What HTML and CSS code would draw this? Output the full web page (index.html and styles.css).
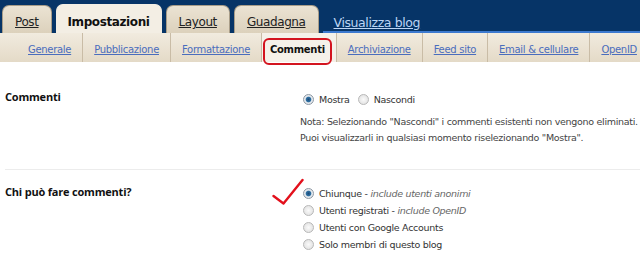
FILE: index.html
```html
<!DOCTYPE html>
<html lang="it">
<head>
    <meta charset="UTF-8">
    <meta name="viewport" content="width=device-width, initial-scale=1.0">
    <title>Impostazioni - Commenti</title>
    <link rel="stylesheet" href="styles.css">
</head>
<body>
    <div class="header">
        <ul class="tabs">
            <li class="tab"><a href="#">Post</a></li>
            <li class="tab active"><a href="#">Impostazioni</a></li>
            <li class="tab"><a href="#">Layout</a></li>
            <li class="tab"><a href="#">Guadagna</a></li>
        </ul>
        <div class="header-rest">
            <a class="view-blog" href="#">Visualizza blog</a>
        </div>
    </div>
    <nav class="subnav">
        <ul>
            <li><a href="#">Generale</a></li>
            <li><a href="#">Pubblicazione</a></li>
            <li><a href="#">Formattazione</a></li>
            <li class="current"><span>Commenti</span></li>
            <li><a href="#">Archiviazione</a></li>
            <li><a href="#">Feed sito</a></li>
            <li><a href="#">Email &amp; cellulare</a></li>
            <li><a href="#">OpenID</a></li>
        </ul>
    </nav>

    <div class="settings">
        <div class="setting-row">
            <div class="setting-label">Commenti</div>
            <div class="setting-options">
                <div class="inline-options">
                    <label><input type="radio" name="show" checked> <span>Mostra</span></label>
                    <label><input type="radio" name="show"> <span>Nascondi</span></label>
                </div>
                <p class="note">Nota: Selezionando "Nascondi" i commenti esistenti non vengono eliminati.<br>Puoi visualizzarli in qualsiasi momento riselezionando "Mostra".</p>
            </div>
        </div>
        <div class="setting-row">
            <div class="setting-label">Chi può fare commenti?</div>
            <div class="setting-options">
                <svg class="check" width="32" height="28" viewBox="0 0 32 28">
                    <path d="M1.5 18 L11.5 25.5 L30.5 2" fill="none" stroke="#e3101c" stroke-width="2.4" stroke-linejoin="round" stroke-linecap="round"/>
                </svg>
                <ul class="option-list">
                    <li><label><input type="radio" name="who" checked> <span>Chiunque - <em>include utenti anonimi</em></span></label></li>
                    <li><label><input type="radio" name="who"> <span>Utenti registrati - <em>include OpenID</em></span></label></li>
                    <li><label><input type="radio" name="who"> <span>Utenti con Google Accounts</span></label></li>
                    <li><label><input type="radio" name="who"> <span>Solo membri di questo blog</span></label></li>
                </ul>
            </div>
        </div>
    </div>
</body>
</html>
```

FILE: styles.css
```css
body {
    margin: 0;
    padding: 0;
    background-color: #fff;
    color: #333;
    font-family: 'DejaVu Sans', Verdana, sans-serif;
}

ul {
    list-style: none;
    margin: 0;
    padding: 0;
}

.header {
    display: flex;
    align-items: flex-end;
    height: 33px;
    background-color: #063467;
    padding-left: 2px;
}

.tabs {
    display: flex;
    align-items: flex-end;
}

.tab {
    margin-right: 4px;
    height: 28px;
    background: linear-gradient(#ebe3d3, #dcd1bc);
    border: 1px solid #a99d88;
    border-bottom: none;
    border-radius: 7px 7px 0 0;
    box-sizing: border-box;
}

.tab a {
    display: block;
    padding: 9px 12px 0;
    color: #222;
    font-size: 12px;
    letter-spacing: -0.4px;
}

.tab.active {
    height: 29px;
    background: #f3eee4;
    border-color: #f3eee4;
}

.tab.active a {
    padding: 10px 11px 0;
    text-decoration: none;
    font-weight: bold;
    color: #111;
}

.header-rest {
    flex: 1;
    align-self: stretch;
    display: flex;
    align-items: flex-end;
    border-bottom: 2px solid #3c79cf;
    padding-left: 11px;
}

.view-blog {
    color: #bcd5f5;
    font-size: 12.5px;
    letter-spacing: -0.4px;
    margin-bottom: 1px;
}

.subnav {
    background: linear-gradient(#f1ebdf, #e4dac7);
    height: 29px;
}

.subnav ul {
    display: flex;
    padding-left: 17px;
    height: 100%;
}

.subnav li {
    display: flex;
    align-items: center;
    padding: 4px 11px 0;
    border-left: 1px solid #c9bca6;
    font-size: 10px;
    letter-spacing: -0.3px;
    white-space: nowrap;
}

.subnav li:first-child {
    border-left: none;
}

.subnav a {
    color: #4a6dbd;
}

.subnav li.current {
    position: relative;
    background-color: #f5f1e9;
    padding: 4px 11px 0 8px;
}

.subnav li.current span {
    color: #111;
    font-weight: bold;
}

.subnav li.current::after {
    content: "";
    position: absolute;
    left: 1px;
    right: 4px;
    top: 5px;
    bottom: -3px;
    border: 2px solid #d3141f;
    border-radius: 6px;
}

.settings {
    padding: 0 0 0 5px;
}

.setting-row {
    display: flex;
    padding: 27px 0 23px;
    border-bottom: 1px solid #ececec;
}

.setting-row:last-child {
    border-bottom: none;
    padding-top: 14px;
}

.setting-label {
    width: 298px;
    flex-shrink: 0;
    font-family: 'Open Sans', sans-serif;
    font-weight: bold;
    font-size: 11px;
    letter-spacing: -0.2px;
    color: #111;
}

.setting-options {
    position: relative;
    font-size: 9.5px;
    letter-spacing: -0.3px;
    color: #333;
    white-space: nowrap;
}

.inline-options {
    display: flex;
    gap: 8px;
    margin-top: 5px;
}

.setting-options label {
    display: flex;
    align-items: center;
    gap: 5px;
}

input[type="radio"] {
    appearance: none;
    -webkit-appearance: none;
    width: 11px;
    height: 11px;
    margin: 0;
    flex-shrink: 0;
    border: 1px solid #b8b8b8;
    border-radius: 50%;
    background: radial-gradient(circle at 50% 50%, #fafafa 0, #e2e2e2 80%);
    box-sizing: border-box;
}

input[type="radio"]:checked {
    border-color: #8e99a5;
    background: radial-gradient(circle, #1e4a78 0, #2f70a2 2.3px, #e6ebf0 3.3px, #dedede 100%);
}

.note {
    margin: 9px 0 0 -3px;
    line-height: 16px;
    color: #444;
}

.option-list {
    margin-top: 1px;
}

.option-list li {
    height: 17px;
    display: flex;
    align-items: center;
}

.option-list em {
    color: #666;
}

.check {
    position: absolute;
    left: -31px;
    top: -6px;
}
```
